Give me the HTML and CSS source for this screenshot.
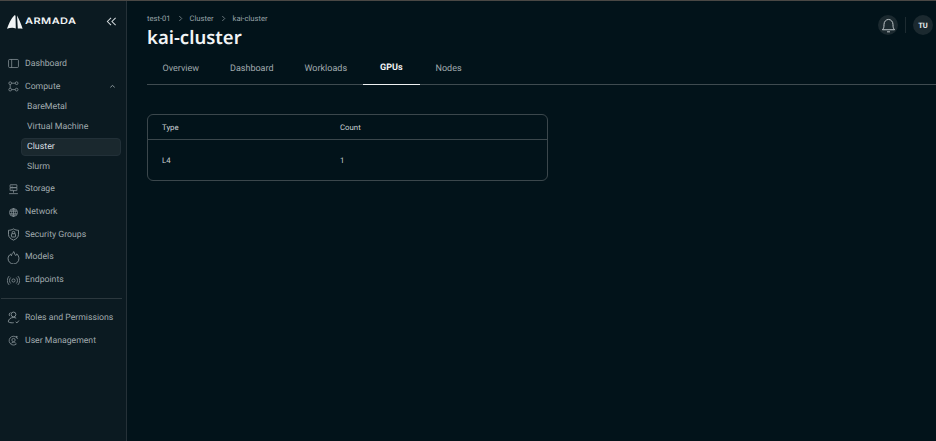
FILE: index.html
```html
<!DOCTYPE html>
<html lang="en">
<head>
<meta charset="utf-8">
<title>kai-cluster</title>
<link rel="stylesheet" href="styles.css">
</head>
<body>
<div class="app">
  <aside class="sidebar">
    <div class="brand">
      <svg class="logo" viewBox="0 0 16 14" width="16" height="14"><path d="M0 13.800C1.500 9.500 4 3.500 7.500.3c.6-.4 1 0 1 .6L8.800 13.400C6 12.400 3 12.800 0 13.800Z" fill="#f2f5f6"/><path d="M10 .4C12 4 14.500 9.500 15.600 13.800 14 13.600 12.400 13.500 10.800 13.600Z" fill="#f2f5f6"/></svg>
      <span class="brand-name">ARMADA</span>
      <svg class="collapse" viewBox="0 0 12 12" width="11" height="11"><path d="M5.500 2 1.500 6l4 4M10.500 2l-4 4 4 4" fill="none" stroke="#d5dbde" stroke-width="1.100"/></svg>
    </div>
    <nav class="nav">
      <a class="item"><svg class="ic" viewBox="0 0 12 12"><rect x=".6" y="1.600" width="10.800" height="8.800" rx="1.200"/><path d="M4 1.600v8.800"/></svg>Dashboard</a>
      <a class="item"><svg class="ic" viewBox="0 0 12 12"><circle cx="2.400" cy="2.400" r="1.500"/><circle cx="9.400" cy="2.400" r="1.500"/><circle cx="2.400" cy="9.400" r="1.500"/><circle cx="9.400" cy="9.400" r="1.500"/><path d="M3.900 2.400h4M2.400 3.900v4M3.900 9.400h4"/></svg>Compute<svg class="chev" viewBox="0 0 8 8" width="7" height="7"><path d="M1.500 5 4 2.800 6.500 5" fill="none" stroke="#aab4b8" stroke-width=".9"/></svg></a>
      <div class="subnav">
        <a class="sub">BareMetal</a>
        <a class="sub">Virtual Machine</a>
        <a class="sub active">Cluster</a>
        <a class="sub">Slurm</a>
      </div>
      <a class="item"><svg class="ic" viewBox="0 0 12 12"><rect x="2.300" y=".8" width="7.400" height="3.200" rx=".3"/><rect x="2.300" y="4" width="7.400" height="3.200" rx=".3"/><path d="M6 7.200v2.300M1.200 10.500h9.600M4 2.400h1M4 5.600h1"/></svg>Storage</a>
      <a class="item"><svg class="ic" viewBox="0 0 12 12"><circle cx="6" cy="6" r="4.300"/><ellipse cx="6" cy="6" rx="2" ry="4.300"/><path d="M1.700 4.500h8.600M1.700 7.500h8.600M6 1.700v8.600"/></svg>Network</a>
      <a class="item"><svg class="ic ic-lg" viewBox="0 0 12 12"><path d="M6 .8c1.500 1 3 1.300 4.600 1.300v4c0 2.300-2 4-4.600 5.100C3.400 10.100 1.400 8.400 1.400 6.100v-4C3 2.100 4.500 1.800 6 .8Z"/><rect x="4.100" y="5.300" width="3.800" height="3" rx=".6"/><path d="M4.800 5.300V4.300a1.200 1.200 0 0 1 2.400 0v1"/></svg>Security Groups</a>
      <a class="item"><svg class="ic ic-lg" viewBox="0 0 12 12"><path d="M6.400 .6c.3 2 .9 2.600 1.700 3.600.5-.4.800-1 .9-1.600C10.300 3.800 11 5.400 11 7a5 5 0 0 1-10 0c0-1.900 1-3.200 2.300-4.100.1.700.4 1.200.8 1.500C4.300 2.900 5.200 1.500 6.400.6Z"/></svg>Models</a>
      <a class="item"><svg class="ic ic-lg" viewBox="0 0 14 12"><circle cx="7" cy="6" r="1.700"/><path d="M4 2.800a4.500 4.500 0 0 0 0 6.400M10 2.800a4.500 4.500 0 0 1 0 6.400M2.300 1.200a7 7 0 0 0 0 9.600M11.700 1.200a7 7 0 0 1 0 9.600"/></svg>Endpoints</a>
      <hr class="divider">
      <a class="item"><svg class="ic ic-lg" viewBox="0 0 12 12"><circle cx="6" cy="3.200" r="2.200"/><path d="M1.200 10c.2-2.500 2.200-4 4.800-4 1 0 1.800.2 2.500.6M1.200 10c1.500 1 3.500 1 5 .8M8 10l1.200 1L11 8.800M2.600 4.700a2 2 0 0 1 .6-3.200"/></svg>Roles and Permissions</a>
      <a class="item"><svg class="ic" viewBox="0 0 12 12"><circle cx="6" cy="5.500" r="1.800"/><path d="M3.200 9.500a3.200 3.200 0 0 1 5.400-.4M10.500 4.400A4.800 4.800 0 1 0 9.400 9.600M9.500 1v2M8.500 2h2"/></svg>User Management</a>
    </nav>
  </aside>
  <main class="main">
    <header class="head">
      <div class="titles">
        <div class="crumbs">
          <span>test-01</span>
          <svg class="sep" viewBox="0 0 6 8" width="5" height="7"><path d="M1.500 1 4.500 4l-3 3" fill="none" stroke="#9aa5aa" stroke-width=".8"/></svg>
          <span>Cluster</span>
          <svg class="sep" viewBox="0 0 6 8" width="5" height="7"><path d="M1.500 1 4.500 4l-3 3" fill="none" stroke="#9aa5aa" stroke-width=".8"/></svg>
          <span>kai-cluster</span>
        </div>
        <h1 class="title">kai-cluster</h1>
      </div>
      <div class="actions">
        <button class="round"><svg viewBox="0 0 14 14" width="17" height="17"><path d="M2 10.500c1-1 1.300-2 1.300-4.300C3.300 3.800 5 2 7 2s3.700 1.800 3.700 4.200c0 2.300.3 3.300 1.300 4.300Z" fill="none" stroke="#c3cacd" stroke-width=".8"/><path d="M5.800 12.200h2.400" stroke="#c3cacd" stroke-width=".8"/></svg></button>
        <span class="vr"></span>
        <span class="round avatar">TU</span>
      </div>
    </header>
    <div class="tabs">
      <a class="tab">Overview</a>
      <a class="tab">Dashboard</a>
      <a class="tab">Workloads</a>
      <a class="tab current">GPUs</a>
      <a class="tab">Nodes</a>
    </div>
    <div class="card">
      <div class="row row-head"><span>Type</span><span>Count</span></div>
      <div class="row row-body"><span>L4</span><span>1</span></div>
    </div>
  </main>
</div>
</body>
</html>
```
FILE: styles.css
```css
* { box-sizing: border-box; }
html, body { margin: 0; height: 100%; }
body {
  background: #02131a;
  color: #c9d0d3;
  font-family: Roboto, "Noto Sans", sans-serif;
  font-size: 9px;
  text-rendering: geometricPrecision;
  overflow: hidden;
}
.app {
  display: flex;
  height: 441px;
  border-top: 1px solid #4a4845;
}
.sidebar {
  width: 127px;
  flex: none;
  background: #0b1a21;
  border-right: 1px solid #253138;
  display: flex;
  flex-direction: column;
}
.brand {
  display: flex;
  align-items: center;
  padding: 3px 9px 0 7px;
  height: 38px;
}
.logo { flex: none; }
.brand-name {
  margin-left: 2px;
  font-family: Inter, sans-serif;
  font-size: 8.800px;
  font-weight: 600;
  letter-spacing: .35px;
  color: #f2f5f6;
  flex: 1;
  transform: scaleX(1.25);
  transform-origin: left center;
}
.nav {
  display: flex;
  flex-direction: column;
  padding-top: 13.500px;
}
.item {
  display: flex;
  align-items: center;
  height: 22.700px;
  padding-left: 8px;
  color: #a0aaae;
  font-size: 8.700px;
  position: relative;
}
.ic {
  width: 11px;
  height: 11px;
  margin-right: 6px;
  flex: none;
  fill: none;
  stroke: #8f9a9f;
  stroke-width: .8;
}
.ic-lg {
  width: 13px;
  height: 13px;
  margin-left: -1px;
  margin-right: 5px;
}
.chev { margin-left: auto; margin-right: 10px; }
.subnav {
  display: flex;
  flex-direction: column;
  margin-top: -1px;
  padding: 0 5px 1.200px 21px;
}
.sub {
  display: flex;
  align-items: center;
  height: 20px;
  padding-left: 6px;
  color: #a0aaae;
  font-size: 8.800px;
  border-radius: 4px;
}
.sub.active {
  height: 18px;
  margin: 1px 0;
  background: #1a282e;
  color: #d9dfe1;
  border: 1px solid #223038;
  padding-left: 5px;
}
.divider {
  width: 121px;
  margin: 6.500px 0 7.500px 1px;
  border: 0;
  border-top: 1px solid #2c383e;
}
.main {
  flex: 1;
  min-width: 0;
  padding-left: 20px;
}
.head {
  display: flex;
  justify-content: space-between;
  height: 49px;
  padding-top: 12px;
}
.crumbs {
  display: flex;
  align-items: center;
  gap: 7px;
  font-size: 7.600px;
  color: #98a3a8;
  height: 10px;
}
.title {
  margin: 3px 0 0;
  font-family: "Noto Sans", sans-serif;
  font-size: 18.500px;
  font-weight: 600;
  line-height: 24px;
  color: #f1f4f5;
}
.actions {
  display: flex;
  align-items: center;
  gap: 7px;
  height: 24px;
  margin-right: 3px;
}
.round {
  width: 20px;
  height: 20px;
  border-radius: 50%;
  border: 0;
  padding: 0;
  background: #1b292f;
  display: flex;
  align-items: center;
  justify-content: center;
}
.vr { width: 1px; height: 16px; background: #1d2b31; }
.avatar {
  color: #e6ebed;
  font-size: 7.500px;
  font-weight: 700;
}
.tabs {
  display: flex;
  height: 35px;
  padding-top: 2px;
  border-bottom: 1px solid #3f4b50;
}
.tab {
  display: flex;
  align-items: center;
  padding: 0 15.500px;
  color: #a0aaae;
  font-size: 9px;
  margin-bottom: -1px;
}
.tab.current {
  color: #f4f6f7;
  font-weight: 700;
  border-bottom: 1px solid #eef1f2;
  padding: 0 17.500px;
}
.card {
  width: 401px;
  margin-top: 29px;
  border: 1px solid #3b474c;
  border-radius: 6px;
  font-size: 7.800px;
  color: #c9d0d3;
}
.row {
  display: grid;
  grid-template-columns: 178px 1fr;
  align-items: center;
  padding-left: 14px;
}
.row-head { height: 25px; border-bottom: 1px solid #3b474c; }
.row-body { height: 40px; }
```
